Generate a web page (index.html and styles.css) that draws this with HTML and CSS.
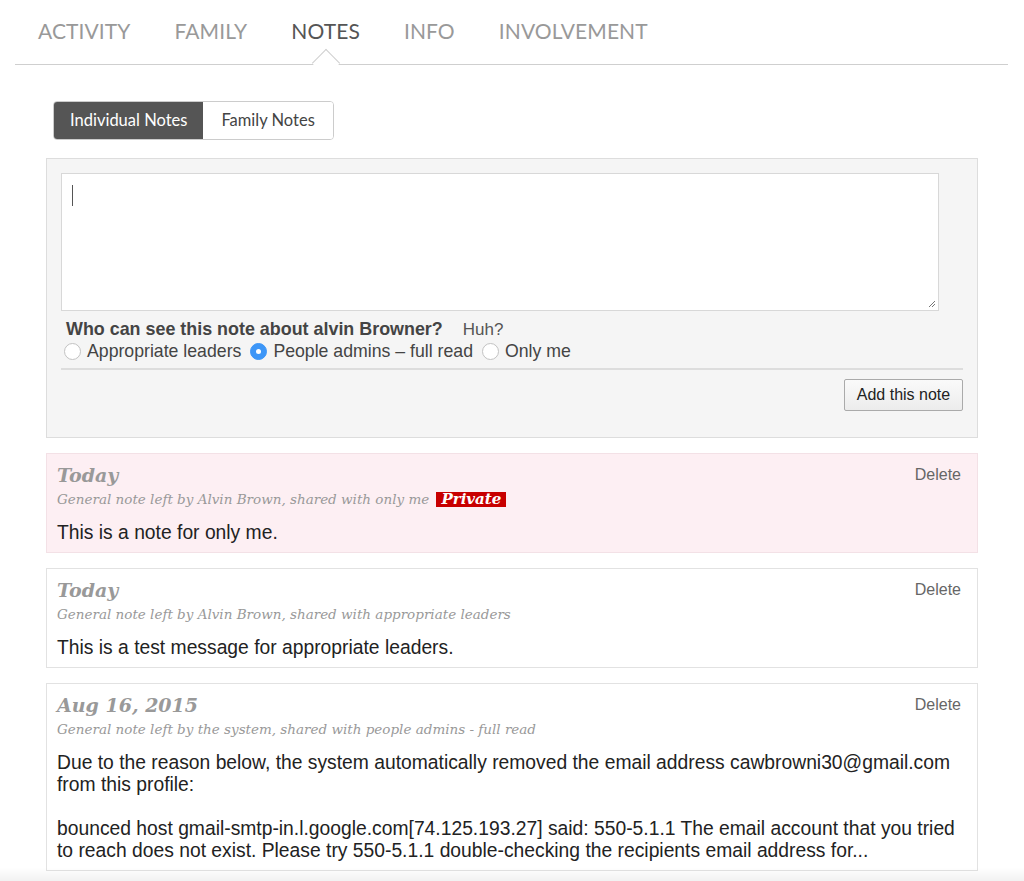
FILE: index.html
```html
<!DOCTYPE html>
<html>
<head>
<meta charset="utf-8">
<link rel="stylesheet" href="styles.css">
</head>
<body>
<nav class="tabs">
  <span class="tab">ACTIVITY</span>
  <span class="tab">FAMILY</span>
  <span class="tab active">NOTES</span>
  <span class="tab">INFO</span>
  <span class="tab">INVOLVEMENT</span>
</nav>
<main class="wrap">
  <div class="seg">
    <span class="seg-btn on">Individual Notes</span>
    <span class="seg-btn">Family Notes</span>
  </div>
  <form class="composer">
    <div class="textarea"><span class="caret"></span>
      <svg class="grip" width="9" height="9" viewBox="0 0 9 9"><path d="M8 2 L2 8 M8 5 L5 8" stroke="#777" stroke-width="1"/></svg>
    </div>
    <div class="who"><b>Who can see this note about alvin Browner?</b><span class="huh">Huh?</span></div>
    <div class="radios">
      <label class="radio"><span class="dot"></span>Appropriate leaders</label>
      <label class="radio"><span class="dot checked"></span>People admins – full read</label>
      <label class="radio"><span class="dot"></span>Only me</label>
    </div>
    <div class="actions"><span class="btn">Add this note</span></div>
  </form>

  <article class="note private">
    <div class="note-head"><h3>Today</h3><span class="del">Delete</span></div>
    <div class="meta">General note left by Alvin Brown, shared with only me <span class="badge">Private</span></div>
    <p class="body">This is a note for only me.</p>
  </article>

  <article class="note">
    <div class="note-head"><h3>Today</h3><span class="del">Delete</span></div>
    <div class="meta">General note left by Alvin Brown, shared with appropriate leaders</div>
    <p class="body">This is a test message for appropriate leaders.</p>
  </article>

  <article class="note">
    <div class="note-head"><h3>Aug 16, 2015</h3><span class="del">Delete</span></div>
    <div class="meta">General note left by the system, shared with people admins - full read</div>
    <p class="body">Due to the reason below, the system automatically removed the email address cawbrowni30@gmail.com from this profile:</p>
    <p class="body">bounced host gmail-smtp-in.l.google.com[74.125.193.27] said: 550-5.1.1 The email account that you tried to reach does not exist. Please try 550-5.1.1 double-checking the recipients email address for...</p>
  </article>
</main>
</body>
</html>
```

FILE: styles.css
```css
html, body {
  margin: 0;
  padding: 0;
  background: #fff;
}
body {
  font-family: "Liberation Sans", Arial, sans-serif;
  color: #333;
  height: 881px;
  overflow: hidden;
}
body::after {
  content: "";
  position: fixed;
  left: 0;
  right: 0;
  bottom: 0;
  height: 14px;
  background: linear-gradient(rgba(0,0,0,0), rgba(0,0,0,0.05));
}

.tabs {
  margin-left: 15px;
  width: 993px;
  height: 65px;
  border-bottom: 1px solid #cfcfcf;
  display: flex;
  padding-left: 23px;
  box-sizing: border-box;
  position: relative;
}
.tab {
  font-family: Lato, "Open Sans", sans-serif;
  font-size: 21px;
  color: #999;
  line-height: 62px;
  height: 64px;
  position: relative;
  letter-spacing: 0.1px;
}
.tab + .tab { margin-left: 44px; }
.tab.active { color: #555; }
.tab.active::after {
  content: "";
  position: absolute;
  left: 50%;
  bottom: -9px;
  width: 19px;
  height: 19px;
  margin-left: -10px;
  background: #fff;
  border-left: 1px solid #cfcfcf;
  border-top: 1px solid #cfcfcf;
  transform: rotate(45deg);
}

.wrap {
  padding: 36px 46px 0 46px;
}

.seg {
  display: inline-flex;
  margin-left: 7px;
  border: 1px solid #ccc;
  border-radius: 4px;
  overflow: hidden;
  height: 39px;
  box-sizing: border-box;
  vertical-align: top;
}
.seg-btn {
  font-family: Lato, "Open Sans", sans-serif;
  font-size: 16.5px;
  line-height: 37px;
  padding: 0 18px;
  color: #444;
  background: #fff;
}
.seg-btn.on {
  background: #555;
  color: #fff;
  padding: 0 16px;
}

.composer {
  margin-top: 18px;
  background: #f5f5f5;
  border: 1px solid #ddd;
  padding: 14px 14px 27px 14px;
  height: 280px;
  box-sizing: border-box;
}
.textarea {
  width: 878px;
  height: 138px;
  box-sizing: border-box;
  background: #fff;
  border: 1px solid #d8d8d8;
  position: relative;
}
.caret {
  position: absolute;
  left: 10px;
  top: 11px;
  width: 1px;
  height: 21px;
  background: #555;
}
.grip {
  position: absolute;
  right: 2px;
  bottom: 2px;
}
.who {
  margin-top: 8px;
  padding-left: 5px;
  font-size: 17.9px;
  line-height: 20px;
  color: #444;
}
.who b { color: #444; }
.huh {
  margin-left: 20px;
  color: #555;
  font-size: 17px;
}
.radios {
  display: flex;
  padding-left: 3px;
  font-size: 17.7px;
  line-height: 22px;
  color: #444;
  border-bottom: 2px solid #ddd;
  padding-bottom: 6px;
}
.radio {
  display: flex;
  align-items: center;
  margin-right: 9px;
}
.dot {
  width: 17px;
  height: 17px;
  border-radius: 50%;
  border: 1px solid #c2c2c2;
  background: #fff;
  box-sizing: border-box;
  margin-right: 6px;
  position: relative;
}
.dot.checked {
  background: #3d96f7;
  border-color: #3d96f7;
}
.dot.checked::after {
  content: "";
  position: absolute;
  left: 5px;
  top: 5px;
  width: 5px;
  height: 5px;
  border-radius: 50%;
  background: #fff;
}
.actions {
  display: flex;
  justify-content: flex-end;
  margin-top: 9px;
}
.btn {
  font-size: 16px;
  color: #222;
  border: 1px solid #aaa;
  border-radius: 2px;
  background: linear-gradient(#fafafa, #ececec);
  line-height: 30px;
  height: 32px;
  box-sizing: border-box;
  width: 119px;
  text-align: center;
}

.note {
  margin-top: 15px;
  border: 1px solid #e2e2e2;
  background: #fff;
  padding: 10px 15px 8px 10px;
}
.note.private {
  background: #fdeff3;
  border-color: #f3e1e6;
}
.note-head {
  display: flex;
  justify-content: space-between;
  align-items: center;
}
.note-head h3 {
  margin: 0;
  font-family: "DejaVu Serif", Georgia, serif;
  font-style: italic;
  font-weight: bold;
  font-size: 19px;
  line-height: 22px;
  color: #999;
}
.del {
  font-size: 16px;
  color: #666;
  margin-right: 1px;
}
.meta {
  font-family: "DejaVu Serif", Georgia, serif;
  font-style: italic;
  font-size: 13.5px;
  line-height: 20px;
  margin-top: 3px;
  color: #999;
}
.badge {
  display: inline-block;
  background: #c80000;
  color: #fff;
  font-weight: bold;
  font-size: 15px;
  padding: 0 5px;
  line-height: 15px;
  margin-left: 3px;
}
.body {
  margin: 13px 0 0 0;
  font-size: 19.3px;
  line-height: 22px;
  color: #222;
}
.body + .body { margin-top: 22px; }
```
